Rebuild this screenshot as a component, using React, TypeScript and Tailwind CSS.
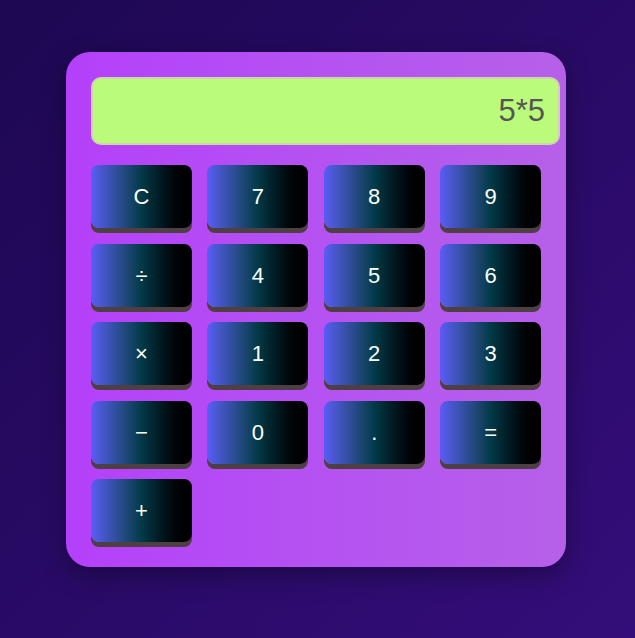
const keys: string[][] = [
  ["C", "7", "8", "9"],
  ["÷", "4", "5", "6"],
  ["×", "1", "2", "3"],
  ["−", "0", ".", "="],
  ["+"],
];

function Key({ label }: { label: string }) {
  return (
    <button className="h-[63px] rounded-lg bg-linear-to-r from-[#5a5cf6] via-[#023a48] to-black text-[22px] text-white shadow-[0_5px_0_#4d3f42]">
      {label}
    </button>
  );
}

export default function App() {
  return (
    <div
      className="flex min-h-[638px] w-full items-start justify-center bg-linear-to-br from-[#1d0852] to-[#340d7a] pt-[52px] pr-[3px]"
      style={{ fontFamily: '"Liberation Sans", Arial, sans-serif' }}
    >
      <div className="w-[500px] rounded-[24px] bg-linear-to-r from-[#b440fa] to-[#b660e9] px-[25px] pt-[25px] pb-[25px] shadow-[0_8px_24px_rgba(0,0,0,0.35)]">
        <div className="flex h-[68px] w-[469px] items-center justify-end rounded-[10px] border-2 border-[#cdd6a6] bg-[#bbfb7c] px-[13px] text-[31px] text-[#555]">
          5*5
        </div>
        <div className="mt-[20px] grid w-[450px] grid-cols-4 gap-x-[15.5px] gap-y-[15.5px]">
          {keys.flat().map((k) => (
            <Key key={k} label={k} />
          ))}
        </div>
      </div>
    </div>
  );
}
